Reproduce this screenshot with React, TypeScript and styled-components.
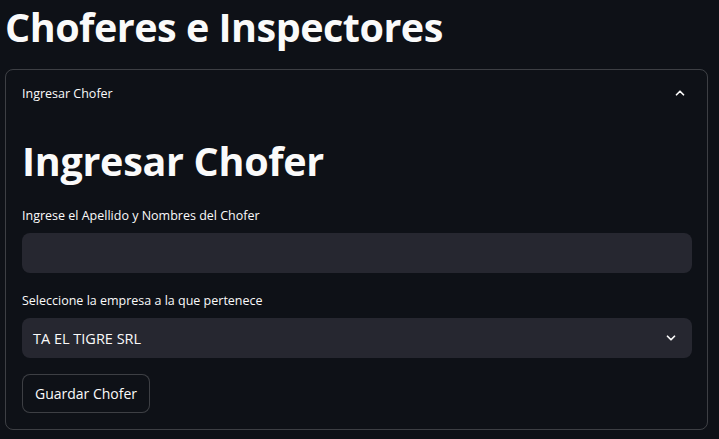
import React from 'react';
import styled, { createGlobalStyle } from 'styled-components';

const GlobalStyle = createGlobalStyle`
  html, body {
    margin: 0;
    padding: 0;
    background: #0e1117;
    color: #fafafa;
    font-family: "Open Sans", "Noto Sans", sans-serif;
  }
  * { box-sizing: border-box; }
`;

const Page = styled.div`
  width: 703px;
  margin-left: 5px;
`;

const Title = styled.h1`
  margin: 0;
  height: 62px;
  font-size: 39.5px;
  line-height: 54px;
  font-weight: 700;
  letter-spacing: -0.5px;
  color: #fafafa;
`;

const Expander = styled.section`
  margin-top: 7px;
  border: 1px solid rgba(250, 250, 250, 0.2);
  border-radius: 8px;
  height: 361px;
`;

const ExpanderHeader = styled.div`
  display: flex;
  align-items: center;
  justify-content: space-between;
  height: 46px;
  padding: 0 20px 0 16px;
  font-size: 12.5px;
`;

const ExpanderBody = styled.div`
  padding: 10px 15px 16px 16px;
  display: flex;
  flex-direction: column;
`;

const Heading = styled.h2`
  margin: 0;
  height: 81px;
  padding-top: 10px;
  font-size: 39.5px;
  line-height: 50px;
  font-weight: 700;
  letter-spacing: -0.3px;
`;

const Label = styled.label`
  display: block;
  font-size: 12.5px;
  line-height: 18px;
  margin-bottom: 8px;
`;

const Field = styled.div<{ $gap: number }>`
  margin-bottom: ${(p) => p.$gap}px;
`;

const Input = styled.div`
  height: 40px;
  border-radius: 8px;
  background: #262730;
`;

const Select = styled.div`
  height: 40px;
  border-radius: 8px;
  background: #262730;
  display: flex;
  align-items: center;
  justify-content: space-between;
  padding: 0 14px 0 11px;
  font-size: 14.5px;
`;

const Button = styled.button`
  align-self: flex-start;
  height: 39px;
  padding: 0 12px;
  border: 1px solid rgba(250, 250, 250, 0.2);
  border-radius: 8px;
  background: #0e1117;
  color: #fafafa;
  font-family: inherit;
  font-size: 14px;
`;

const Chevron = ({ up }: { up?: boolean }) => (
  <svg width="14" height="14" viewBox="0 0 24 24" fill="none" stroke="#fafafa" strokeWidth="3"
    strokeLinecap="round" strokeLinejoin="round">
    <path d={up ? 'M6 15l6-6 6 6' : 'M6 9l6 6 6-6'} />
  </svg>
);

const App = () => {
  return (
    <Page>
      <GlobalStyle />
      <Title>Choferes e Inspectores</Title>
      <Expander>
        <ExpanderHeader>
          <span>Ingresar Chofer</span>
          <Chevron up />
        </ExpanderHeader>
        <ExpanderBody>
          <Heading>Ingresar Chofer</Heading>
          <Field $gap={19}>
            <Label>Ingrese el Apellido y Nombres del Chofer</Label>
            <Input />
          </Field>
          <Field $gap={16}>
            <Label>Seleccione la empresa a la que pertenece</Label>
            <Select>
              <span>TA EL TIGRE SRL</span>
              <Chevron />
            </Select>
          </Field>
          <Button>Guardar Chofer</Button>
        </ExpanderBody>
      </Expander>
    </Page>
  );
};

export default App;
